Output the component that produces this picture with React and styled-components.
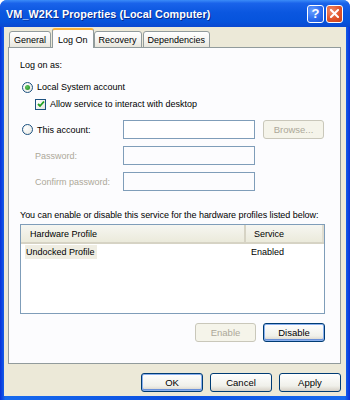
import React from 'react';
import styled, { createGlobalStyle } from 'styled-components';

const GlobalStyle = createGlobalStyle`
  html, body {
    margin: 0;
    padding: 0;
    background: #ffffff;
  }

  body {
    font-family: "Liberation Sans", Arial, sans-serif;
    font-size: 9px;
    color: #000;
  }
`;

const Window = styled.div`
  width: 350px;
  height: 400px;
  box-sizing: border-box;
  display: flex;
  flex-direction: column;
  background: linear-gradient(to right, #0831d9 0%, #166aee 1.5%, #0a4ee0 50%, #166aee 98.5%, #0831d9 100%);
  border-radius: 7px 7px 0 0;
  overflow: hidden;
  padding: 0 4px 4px 4px;
`;

const TitleBar = styled.div`
  height: 27px;
  margin: 0 -4px;
  padding: 0 7px 0 6px;
  display: flex;
  align-items: center;
  background: linear-gradient(to bottom, #3b8cf8 0%, #1a63ea 12%, #0b57e0 45%, #0653dc 80%, #0a48d0 100%);
`;

const Title = styled.div`
  flex: 1;
  color: #fff;
  font-weight: bold;
  font-size: 10.8px;
  letter-spacing: 0.1px;
  text-shadow: 1px 1px 0 #0a2a8a;
`;

const CaptionButton = styled.div`
  width: 17px;
  height: 18px;
  margin-left: 2px;
  box-sizing: border-box;
  border: 1px solid #fff;
  border-radius: 3px;
  display: flex;
  align-items: center;
  justify-content: center;
  color: #fff;
  font-weight: bold;
  font-size: 13px;
  background: ${p => (p.close
    ? 'radial-gradient(circle at 30% 30%, #f08a6a, #e0542a 55%, #c8401c)'
    : 'radial-gradient(circle at 30% 30%, #6aa0ff, #2c6cf0 55%, #1a55d8)')};
`;

const Body = styled.div`
  flex: 1;
  display: flex;
  flex-direction: column;
  background: #ece9d8;
  padding: 1px 5px 0 4px;
`;

const TabStrip = styled.div`
  display: flex;
  align-items: flex-end;
  height: 20px;
  padding-left: 1px;
  position: relative;
  z-index: 1;
  margin-bottom: -1px;
`;

const Tab = styled.div`
  box-sizing: border-box;
  height: ${p => (p.active ? '20px' : '17px')};
  padding: ${p => (p.active ? '2px 5px 0' : '0 4px')};
  margin-right: ${p => (p.active ? '0' : '1px')};
  display: flex;
  align-items: center;
  border: 1px solid #919b9c;
  border-bottom: ${p => (p.active ? 'none' : '1px solid #919b9c')};
  border-top: ${p => (p.active ? '2px solid #f8b33c' : '1px solid #919b9c')};
  border-radius: 3px 3px 0 0;
  background: ${p => (p.active ? '#fcfcfe' : 'linear-gradient(to bottom, #ffffff, #f3f3ef 60%, #e8e6dc)')};
  font-size: 9px;
  white-space: nowrap;
`;

const Panel = styled.div`
  height: 317px;
  box-sizing: border-box;
  border: 1px solid #919b9c;
  background: #fcfcfe;
  padding: 10px 15px 0 11px;
  display: flex;
  flex-direction: column;
`;

const Text = styled.div`
  height: 14px;
  line-height: 14px;
  white-space: nowrap;
  color: ${p => (p.disabled ? '#aca899' : '#000')};
`;

const OptionRow = styled.div`
  display: flex;
  align-items: center;
  gap: 4px;
  height: 14px;
  margin-top: ${p => p.gap || 0}px;
  padding-left: ${p => p.indent || 2}px;
`;

const Radio = styled.span`
  width: 11px;
  height: 11px;
  box-sizing: border-box;
  border-radius: 50%;
  border: 1px solid #1c5180;
  background: radial-gradient(circle at 35% 35%, #ffffff, #e6e6e0);
  display: flex;
  align-items: center;
  justify-content: center;

  &::after {
    content: '';
    display: ${p => (p.checked ? 'block' : 'none')};
    width: 5px;
    height: 5px;
    border-radius: 50%;
    background: radial-gradient(circle at 35% 35%, #5fc45f, #1f8a1f);
  }
`;

const Check = styled.span`
  width: 11px;
  height: 11px;
  box-sizing: border-box;
  border: 1px solid #1c5180;
  background: linear-gradient(135deg, #ffffff, #e6e6e0);
  display: flex;
  align-items: center;
  justify-content: center;
`;

const AccountGrid = styled.div`
  display: grid;
  grid-template-columns: 95px 132px 61px;
  column-gap: 8px;
  row-gap: 7px;
  align-items: center;
  margin-top: 9px;
`;

const FieldLabel = styled.div`
  display: flex;
  align-items: center;
  gap: 4px;
  padding-left: ${p => (p.plain ? 15 : 2)}px;
  color: ${p => (p.disabled ? '#aca899' : '#000')};
  white-space: nowrap;
`;

const Input = styled.div`
  height: 19px;
  box-sizing: border-box;
  border: 1px solid #7f9db9;
  background: ${p => (p.disabled ? '#fcfcfe' : '#ffffff')};
`;

const Button = styled.div`
  height: 19px;
  box-sizing: border-box;
  width: ${p => p.w || 62}px;
  display: flex;
  align-items: center;
  justify-content: center;
  border: 1px solid ${p => (p.disabled ? '#c9c7ba' : '#003c74')};
  border-radius: 3px;
  background: ${p => (p.disabled ? '#f5f4ea' : 'linear-gradient(to bottom, #ffffff, #f0f0ea 70%, #d6d0c5)')};
  color: ${p => (p.disabled ? '#aca899' : '#000')};
  box-shadow: ${p => (p.focus ? 'inset 0 0 0 1px #8ab0ee, inset 0 -1px 0 1px #6a90d8' : 'none')};
  font-size: 9.5px;
`;

const Note = styled(Text)`
  margin-top: 17px;
  letter-spacing: -0.05px;
`;

const ListBox = styled.div`
  margin-top: 2px;
  height: 90px;
  box-sizing: border-box;
  border: 1px solid #7f9db9;
  background: #fff;
  display: flex;
  flex-direction: column;
`;

const ListHeader = styled.div`
  display: grid;
  grid-template-columns: 225px 1fr;
  height: 17px;
  background: linear-gradient(to bottom, #f6f6f1, #ebeadb);
  border-bottom: 2px solid #d6d3c4;
`;

const HeaderCell = styled.div`
  display: flex;
  align-items: center;
  padding-left: ${p => p.pad || 9}px;
  border-right: 2px solid ${p => (p.last ? '#e0ddd0' : '#d6d3c4')};
`;

const ListRow = styled.div`
  display: grid;
  grid-template-columns: 225px 1fr;
  height: 14px;
  margin-top: 1px;
`;

const Cell = styled.div`
  display: flex;
  align-items: center;
  padding-left: ${p => p.pad || 5}px;
`;

const Selected = styled.span`
  background: #efede2;
  padding: 0 2px 0 1px;
  line-height: 14px;
`;

const ButtonRow = styled.div`
  display: flex;
  justify-content: flex-end;
  gap: 7px;
  margin-top: 9px;
`;

const Footer = styled.div`
  display: flex;
  justify-content: flex-end;
  gap: 7px;
  margin-top: 9px;
`;

export default function App() {
  return (
    <>
      <GlobalStyle />
      <Window>
        <TitleBar>
          <Title>VM_W2K1 Properties (Local Computer)</Title>
          <CaptionButton>?</CaptionButton>
          <CaptionButton close>
            <svg width="9" height="9" viewBox="0 0 9 9">
              <path d="M1 1 L8 8 M8 1 L1 8" stroke="#fff" strokeWidth="2" strokeLinecap="square" />
            </svg>
          </CaptionButton>
        </TitleBar>
        <Body>
          <TabStrip>
            <Tab>General</Tab>
            <Tab active>Log On</Tab>
            <Tab>Recovery</Tab>
            <Tab>Dependencies</Tab>
          </TabStrip>
          <Panel>
            <Text>Log on as:</Text>
            <OptionRow gap={8}>
              <Radio checked />
              <span>Local System account</span>
            </OptionRow>
            <OptionRow gap={3} indent={15}>
              <Check>
                <svg width="8" height="8" viewBox="0 0 8 8">
                  <path d="M1 4 L3 6 L7 1.5" fill="none" stroke="#21a121" strokeWidth="1.8" />
                </svg>
              </Check>
              <span>Allow service to interact with desktop</span>
            </OptionRow>
            <AccountGrid>
              <FieldLabel>
                <Radio />
                <span>This account:</span>
              </FieldLabel>
              <Input />
              <Button disabled w={61}>Browse...</Button>
              <FieldLabel plain disabled>Password:</FieldLabel>
              <Input disabled />
              <span />
              <FieldLabel plain disabled>Confirm password:</FieldLabel>
              <Input disabled />
              <span />
            </AccountGrid>
            <Note>You can enable or disable this service for the hardware profiles listed below:</Note>
            <ListBox>
              <ListHeader>
                <HeaderCell>Hardware Profile</HeaderCell>
                <HeaderCell pad={8} last>Service</HeaderCell>
              </ListHeader>
              <ListRow>
                <Cell pad={4}><Selected>Undocked Profile</Selected></Cell>
                <Cell pad={5}>Enabled</Cell>
              </ListRow>
            </ListBox>
            <ButtonRow>
              <Button disabled w={61}>Enable</Button>
              <Button focus w={62}>Disable</Button>
            </ButtonRow>
          </Panel>
          <Footer>
            <Button focus>OK</Button>
            <Button>Cancel</Button>
            <Button>Apply</Button>
          </Footer>
        </Body>
      </Window>
    </>
  );
}
